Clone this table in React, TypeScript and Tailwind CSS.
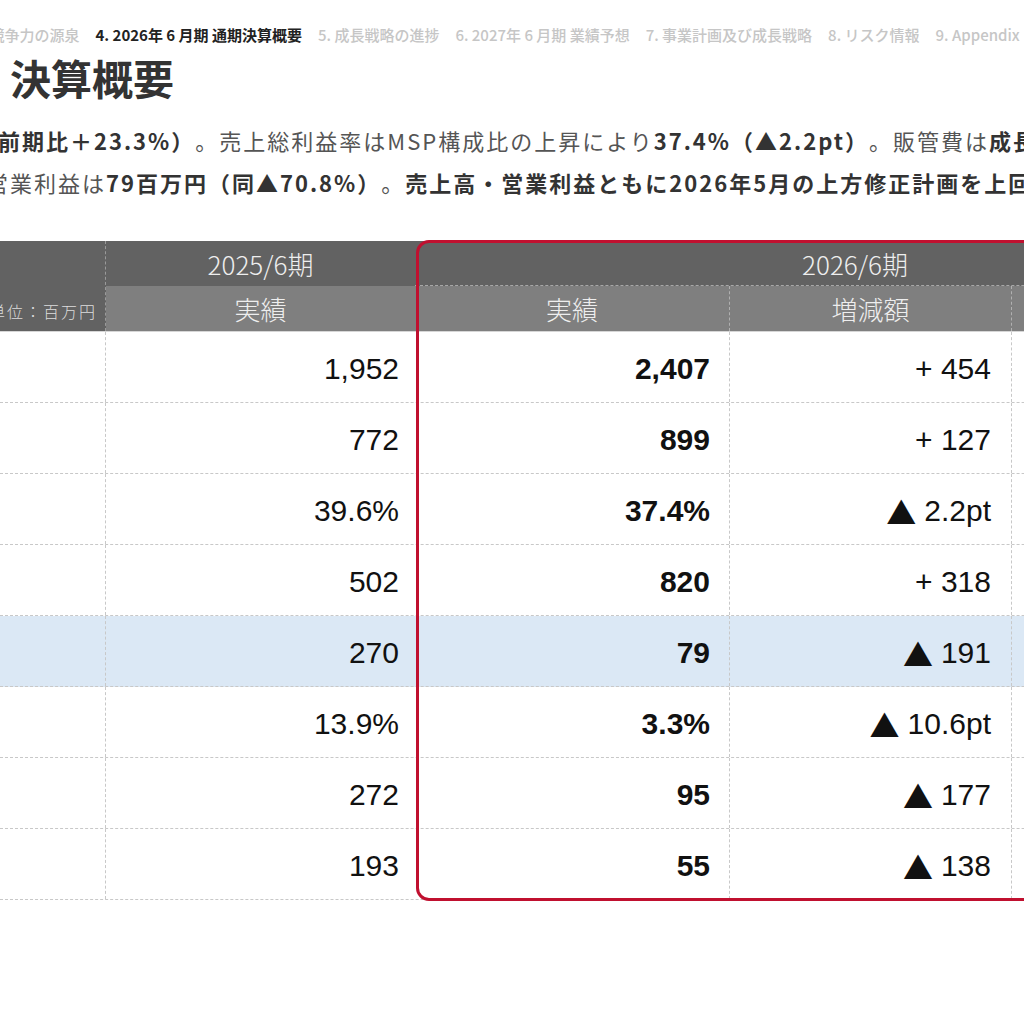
import React from "react";

const rows = [
  { a: "1,952", b: "2,407", c: "+ 454" },
  { a: "772", b: "899", c: "+ 127" },
  { a: "39.6%", b: "37.4%", c: "2.2pt", tri: true },
  { a: "502", b: "820", c: "+ 318" },
  { a: "270", b: "79", c: "191", tri: true, hl: true },
  { a: "13.9%", b: "3.3%", c: "10.6pt", tri: true },
  { a: "272", b: "95", c: "177", tri: true },
  { a: "193", b: "55", c: "138", tri: true },
];

const jp = { fontFamily: '"Noto Sans CJK JP", "Noto Sans", sans-serif' };
const num = { fontFamily: '"Liberation Sans", Arial, "Noto Sans CJK JP", sans-serif' };

export default function App() {
  return (
    <div className="w-[1024px] h-[1024px] overflow-hidden bg-white relative [text-spacing-trim:space-all]" style={jp}>
      {/* nav */}
      <div className="mt-[24px] h-[22px] flex gap-[16px] whitespace-nowrap text-[15px] leading-[22px] font-medium text-[#c6c6c6] -ml-[27px]">
        <span>3. 競争力の源泉</span>
        <span className="text-[#222] font-bold">4. 2026年 6 月期 通期決算概要</span>
        <span>5. 成長戦略の進捗</span>
        <span>6. 2027年 6 月期 業績予想</span>
        <span>7. 事業計画及び成長戦略</span>
        <span>8. リスク情報</span>
        <span>9. Appendix</span>
      </div>

      {/* title */}
      <div className="mt-[7px] pl-[10px] h-[48px] text-[41px] leading-[48px] font-bold text-[#333] whitespace-nowrap">
        決算概要
      </div>

      {/* paragraph */}
      <div className="mt-[18px] text-[22px] leading-[42px] tracking-[2px] text-[#555] whitespace-nowrap">
        <div className="-ml-[2px]">
          <b className="text-[#333]">前期比＋23.3%）</b>。売上総利益率はMSP構成比の上昇により
          <b className="text-[#333]">37.4%（▲2.2pt）</b>。販管費は<b className="text-[#333]">成長投資</b>
        </div>
        <div className="-ml-[14px]">
          営業利益は<b className="text-[#333]">79百万円（同▲70.8%）</b>。
          <b className="text-[#333]">売上高・営業利益ともに2026年5月の上方修正計画を上回りました</b>
        </div>
      </div>

      {/* table */}
      <div className="mt-[38px] relative w-[1295px]">
        <div className="flex h-[91px] border-b border-[#d6d6d6] text-[#eeeeee] font-light">
          <div className="w-[106px] shrink-0 bg-[#626262] border-r border-dashed border-[#9a9a9a] flex items-end justify-end pr-[8px] pb-[8px] text-[16px] text-[#dddddd] tracking-[2px] whitespace-nowrap overflow-hidden">
            単位：百万円
          </div>
          <div className="w-[309px] shrink-0 flex flex-col">
            <div className="h-[45px] bg-[#626262] flex items-center justify-center text-[26px]">2025/6期</div>
            <div className="flex-1 bg-[#7f7f7f] flex items-center justify-center text-[26px]">実績</div>
          </div>
          <div className="w-[880px] shrink-0 flex flex-col">
            <div className="h-[45px] bg-[#626262] border-b border-dashed border-[#a8a8a8] flex items-center justify-center text-[26px]">
              2026/6期
            </div>
            <div className="flex-1 bg-[#7f7f7f] flex text-[26px]">
              <div className="w-[315px] border-r border-dashed border-[#b0b0b0] flex items-center justify-center">実績</div>
              <div className="w-[282px] border-r border-dashed border-[#b0b0b0] flex items-center justify-center">増減額</div>
              <div className="w-[283px] flex items-center justify-center">増減率</div>
            </div>
          </div>
        </div>

        {rows.map((r, i) => (
          <div
            key={i}
            className={`flex h-[71px] border-b border-dashed border-[#c8c8c8] text-[30px] text-[#111] ${r.hl ? "bg-[#dbe8f5]" : ""}`}
            style={num}
          >
            <div className="w-[106px] shrink-0 border-r border-dashed border-[#c8c8c8]" />
            <div className="w-[309px] shrink-0 flex items-center justify-end pr-[16px] pt-[3px]">{r.a}</div>
            <div className="w-[315px] shrink-0 border-r border-dashed border-[#c8c8c8] flex items-center justify-end pr-[19px] pt-[3px] font-bold">
              {r.b}
            </div>
            <div className="w-[282px] shrink-0 border-r border-dashed border-[#c8c8c8] flex items-center justify-end pr-[20px] pt-[3px] whitespace-nowrap">
              {r.tri ? (
                <>
                  <span className="text-[30px] leading-none mr-[8px]" style={jp}>▲</span>
                  <span>{r.c}</span>
                </>
              ) : (
                r.c
              )}
            </div>
            <div className="w-[283px] shrink-0" />
          </div>
        ))}

        <div className="absolute left-[416px] top-[-1px] bottom-[-1px] w-[900px] border-[3px] border-[#c0102f] rounded-[13px] pointer-events-none" />
      </div>
    </div>
  );
}
